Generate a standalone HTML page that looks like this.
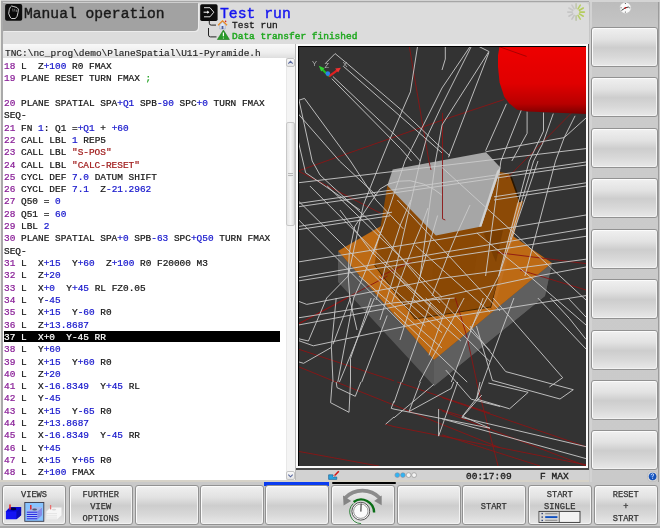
<!DOCTYPE html>
<html><head><meta charset="utf-8">
<style>
*{margin:0;padding:0;box-sizing:border-box}
html,body{width:660px;height:528px;overflow:hidden;background:#cecece;font-family:"Liberation Mono",monospace}
.a{position:absolute;will-change:transform}
.sk{position:absolute;will-change:transform;border:1px solid #929292;border-radius:3px;background:linear-gradient(#f0f0f0,#e2e2e2 30%,#cdcdcd 52%,#d8d8d8 75%,#e8e8e8);box-shadow:inset 1px 1px 0 #fbfbfb,inset -1px -1px 0 #f2f2f2}
.skt{position:absolute;left:0;width:100%;text-align:center;font-size:8.7px;line-height:11.65px;color:#333;white-space:pre;-webkit-text-stroke:0.25px #333}
#hdr{left:3px;top:2.7px;width:586px;height:41.3px;background:#dcdcdc;border-radius:0 4px 0 0}
#hdrL{left:3px;top:2.7px;width:194.5px;height:28px;background:#a2a2a2;border-radius:0 0 4px 0;box-shadow:1px 1px 0 #ececec}
#t1{left:24.2px;top:3.5px;font-size:14.65px;line-height:20px;color:#1a1a1a;white-space:pre;-webkit-text-stroke:0.4px #1a1a1a}
#t2{left:220px;top:3.9px;font-size:14.75px;line-height:20px;color:#1414f0;white-space:pre;-webkit-text-stroke:0.4px #1414f0}
#t3{left:232px;top:20px;font-size:9.5px;line-height:12px;color:#1a1a1a;white-space:pre;-webkit-text-stroke:0.3px #1a1a1a}
#t4{left:232px;top:31px;font-size:9.5px;line-height:12px;color:#20a820;white-space:pre;-webkit-text-stroke:0.45px #20a820}
#path{left:3px;top:44px;width:292px;height:14px;background:linear-gradient(#f8f8f8,#eeeeee 60%,#dedede)}
#pathT{left:5px;top:47.5px;font-size:9.48px;line-height:12px;color:#1e1e1e;white-space:pre;-webkit-text-stroke:0.15px #1e1e1e}
#code{left:3px;top:58px;width:292px;height:422px;background:#fff}
#lines{left:4px;top:61px;font-size:9.45px;line-height:12.32px;color:#151515;white-space:pre;-webkit-text-stroke:0.22px currentColor}
.n{color:#8a2098}.b{color:#1616cc}.r{color:#a01c1c}.g{color:#20a020}
.hl{color:#fff}
#statT{left:466px;top:470.6px;font-size:9.5px;line-height:12px;color:#1e1e1e;white-space:pre;-webkit-text-stroke:0.35px #1e1e1e}
</style></head><body>
<!-- outer left border -->
<div class="a" style="left:0;top:0;width:660px;height:2px;background:#d4d4d4"></div>
<div class="a" style="left:1px;top:1.4px;width:588px;height:1.3px;background:#a6a6a6"></div>
<div class="a" style="left:0;top:0;width:1px;height:483px;background:#ebebe6"></div>
<div class="a" style="left:1px;top:2px;width:2px;height:479px;background:#a9a9a9"></div>
<div class="a" id="hdr"></div>

<div class="a" id="hdrL"></div>
<!-- hand icon -->
<svg class="a" style="left:4px;top:3px" width="20" height="20" viewBox="0 0 20 20">
<rect x="1.1" y="1.1" width="17.1" height="16.7" rx="1.8" fill="#0e0e0e"/>
<path d="M6.4,4.2 L5.3,6.6 L4.7,10.6 L6.1,14 L7.4,15.5 L11.4,15.5 L13.1,13.3 L14,9.5 L14.4,6.1 L12.9,4.5 L9.8,3.6 L7.6,3 Z" fill="#0a0a0a" stroke="#e4e4e4" stroke-width="0.9" stroke-linejoin="round"/>
<path d="M8.7,5.6 L9.1,8.6 M10.6,5.9 L11,8.6 M12.5,6.6 L12.7,9" stroke="#8a8a8a" stroke-width="0.8"/>
</svg>
<div class="a" id="t1">Manual operation</div>
<!-- test run icon -->
<svg class="a" style="left:199px;top:3px" width="20" height="20" viewBox="199 3 20 20">
<rect x="200.2" y="4.3" width="17.4" height="16.6" rx="1.6" fill="#0c0c0c"/>
<path d="M204,7.7 L210,7.7 L213.8,12.2 L210,16.8 L204,16.8" fill="none" stroke="#e0e0e0" stroke-width="1"/>
<path d="M203.6,12.2 L208.6,12.2" stroke="#f4f4f4" stroke-width="1.1"/>
<path d="M207.2,10.6 L209.4,12.2 L207.2,13.8 Z" fill="#f4f4f4"/>
</svg>
<svg class="a" style="left:205px;top:20px" width="30" height="22" viewBox="205 20 30 22">
<path d="M209.3,20.5 L209.3,23.2 Q209.3,25.1 211.2,25.1 L216,25.1" fill="none" stroke="#222" stroke-width="1"/>
<path d="M208.5,28 L208.5,35 Q208.5,36.9 210.4,36.9 L216.5,36.9" fill="none" stroke="#222" stroke-width="1"/>
<!-- house -->
<path d="M218.2,25.3 L222.5,21 L227,25.3" fill="none" stroke="#f08a18" stroke-width="1.4"/>
<path d="M219.8,24.6 L222.5,22 L225.2,24.6 L225.2,29 L219.8,29 Z" fill="#dfe6f4" stroke="#8898b8" stroke-width="0.5"/>
<rect x="221.6" y="26" width="1.8" height="3" fill="#4a5a9a"/>
<circle cx="225.6" cy="21.4" r="0.8" fill="#d02020"/>
<!-- warning -->
<path d="M223.4,30 L229.4,39.5 L217.4,39.5 Z" fill="#2a9a2a" stroke="#1c7a1c" stroke-width="0.6" stroke-linejoin="round"/>
<path d="M223.4,32.4 L223.4,36.2" stroke="#fff" stroke-width="1.2"/>
<circle cx="223.4" cy="38" r="0.6" fill="#fff"/>
</svg>
<div class="a" id="t2">Test run</div>
<div class="a" id="t3">Test run</div>
<div class="a" id="t4">Data transfer finished</div>
<!-- spinner -->
<svg class="a" style="left:566px;top:2px" width="20" height="20" viewBox="566 2 20 20">
<g stroke-linecap="round" stroke-width="1.6">
<line x1="579.8" y1="12.1" x2="584.4" y2="12.1" stroke="#b4cc5c"/>
<line x1="579.4" y1="13.9" x2="583.3" y2="16.2" stroke="#b4cc5c"/>
<line x1="578" y1="15.4" x2="580.3" y2="19.1" stroke="#b8cf66"/>
<line x1="576.1" y1="15.8" x2="576.1" y2="20.3" stroke="#bcc4a8"/>
<line x1="574.2" y1="15.4" x2="571.9" y2="19.1" stroke="#c4c4c4"/>
<line x1="572.8" y1="13.9" x2="568.9" y2="16.2" stroke="#c4c4c4"/>
<line x1="572.4" y1="12.1" x2="567.8" y2="12.1" stroke="#c6c6c6"/>
<line x1="572.8" y1="10.3" x2="568.9" y2="8" stroke="#c8c8c8"/>
<line x1="574.2" y1="8.8" x2="571.9" y2="5.1" stroke="#c8c8c8"/>
<line x1="576.1" y1="8.4" x2="576.1" y2="3.9" stroke="#c0c6b0"/>
<line x1="578" y1="8.8" x2="580.3" y2="5.1" stroke="#b8cf66"/>
<line x1="579.4" y1="10.3" x2="583.3" y2="8" stroke="#b4cc5c"/>
</g></svg>

<div class="a" id="path"></div>
<div class="a" id="pathT">TNC:\nc_prog\demo\PlaneSpatial\U11-Pyramide.h</div>
<div class="a" id="code"></div>
<div class="a" style="left:4px;top:331px;width:276px;height:11px;background:#000"></div>
<div class="a" id="lines"><span class="n">18</span> L  Z<span class="b">+100</span> R0 FMAX
<span class="n">19</span> PLANE RESET TURN FMAX <span class="g">;</span>

<span class="n">20</span> PLANE SPATIAL SPA<span class="b">+Q1</span> SPB<span class="b">-90</span> SPC<span class="b">+0</span> TURN FMAX
SEQ-
<span class="n">21</span> FN <span class="b">1</span>: Q1 =<span class="b">+Q1</span> + <span class="b">+60</span>
<span class="n">22</span> CALL LBL <span class="b">1</span> REP5
<span class="n">23</span> CALL LBL <span class="r">"S-POS"</span>
<span class="n">24</span> CALL LBL <span class="r">"CALC-RESET"</span>
<span class="n">25</span> CYCL DEF <span class="b">7.0</span> DATUM SHIFT
<span class="n">26</span> CYCL DEF <span class="b">7.1</span>  Z<span class="b">-21.2962</span>
<span class="n">27</span> Q50 = <span class="b">0</span>
<span class="n">28</span> Q51 = <span class="b">60</span>
<span class="n">29</span> LBL <span class="b">2</span>
<span class="n">30</span> PLANE SPATIAL SPA<span class="b">+0</span> SPB<span class="b">-63</span> SPC<span class="b">+Q50</span> TURN FMAX
SEQ-
<span class="n">31</span> L  X<span class="b">+15</span>  Y<span class="b">+60</span>  Z<span class="b">+100</span> R0 F20000 M3
<span class="n">32</span> L  Z<span class="b">+20</span>
<span class="n">33</span> L  X<span class="b">+0</span>  Y<span class="b">+45</span> RL FZ0.05
<span class="n">34</span> L  Y<span class="b">-45</span>
<span class="n">35</span> L  X<span class="b">+15</span>  Y<span class="b">-60</span> R0
<span class="n">36</span> L  Z<span class="b">+13.8687</span>
<span class="hl">37 L  X+0  Y-45 RR</span>
<span class="n">38</span> L  Y<span class="b">+60</span>
<span class="n">39</span> L  X<span class="b">+15</span>  Y<span class="b">+60</span> R0
<span class="n">40</span> L  Z<span class="b">+20</span>
<span class="n">41</span> L  X<span class="b">-16.8349</span>  Y<span class="b">+45</span> RL
<span class="n">42</span> L  Y<span class="b">-45</span>
<span class="n">43</span> L  X<span class="b">+15</span>  Y<span class="b">-65</span> R0
<span class="n">44</span> L  Z<span class="b">+13.8687</span>
<span class="n">45</span> L  X<span class="b">-16.8349</span>  Y<span class="b">-45</span> RR
<span class="n">46</span> L  Y<span class="b">+45</span>
<span class="n">47</span> L  X<span class="b">+15</span>  Y<span class="b">+65</span> R0
<span class="n">48</span> L  Z<span class="b">+100</span> FMAX</div>
<!-- scrollbar -->
<div class="a" style="left:286px;top:58px;width:9px;height:422px;background:#f4f4f4;border-left:1px solid #e8e8e8"></div>
<div class="a" style="left:286px;top:58px;width:9px;height:9px;background:linear-gradient(#fafafa,#e4e4e4);border:1px solid #c4c4c4;border-radius:2px"></div>
<svg class="a" style="left:286px;top:58px" width="9" height="9"><path d="M2.3,5.6 L4.5,3.4 L6.7,5.6" fill="none" stroke="#5868a0" stroke-width="1.1"/></svg>
<div class="a" style="left:286px;top:122px;width:9px;height:104px;background:linear-gradient(90deg,#e6e6e6,#f6f6f6 50%,#dedede);border:1px solid #c8c8c8;border-radius:2px"></div>
<div class="a" style="left:288px;top:173px;width:5px;height:4px;background:repeating-linear-gradient(#b8b8b8 0 1px,#ececec 1px 2px)"></div>
<div class="a" style="left:286px;top:471px;width:9px;height:9px;background:linear-gradient(#fafafa,#e4e4e4);border:1px solid #c4c4c4;border-radius:2px"></div>
<svg class="a" style="left:286px;top:471px" width="9" height="9"><path d="M2.3,3.6 L4.5,5.8 L6.7,3.6" fill="none" stroke="#5868a0" stroke-width="1.1"/></svg>
<div class="a" style="left:295px;top:44px;width:1px;height:438px;background:#b8b8b8"></div>

<!-- graphic frame -->
<div class="a" style="left:296px;top:44px;width:293.5px;height:425.5px;background:#4a4a4a"></div>
<div class="a" style="left:296px;top:44px;width:292px;height:424px;background:#fafafa"></div>
<div class="a" style="left:298px;top:46px;width:288px;height:420px;background:#000"></div>
<svg class="a" style="left:299px;top:47px" width="287" height="419" viewBox="299 47 287 419">
<rect x="299" y="47" width="287" height="419" fill="#333"/>
<defs><linearGradient id="cyl" x1="0" y1="0" x2="0" y2="1"><stop offset="0" stop-color="#ee0000"/><stop offset="0.55" stop-color="#e00000"/><stop offset="0.85" stop-color="#b80000"/><stop offset="1" stop-color="#7a0000"/></linearGradient></defs>
<!-- base block -->
<path d="M338,251 L338,282 L434,386 L545,296 L552,263 L434,360 Z" fill="#565656"/>
<path d="M434,360 L434,386 L545,296 L552,263 Z" fill="#5f5f5f"/>
<!-- orange square -->
<path d="M338,251 L445,189 L552,263 L434,360 Z" fill="#bd6a14"/>
<!-- pyramid -->
<path d="M394,172 L387.3,185.5 L374.5,265 L415,319 L490.5,307 L520,202 L510,174 L499.5,171.8 L498,168 Z" fill="#8c4a06"/>
<path d="M483,232 L503,230 L496,262 Z" fill="#7a3e02"/>
<path d="M436,235 L481,227 L470,300 L430,305 Z" fill="#8a4804"/>
<path d="M374.5,265 L415,319 L490.5,307" fill="none" stroke="#3a2000" stroke-width="0.9"/>
<path d="M510,174 L520,202 L491,308" fill="none" stroke="#2a1600" stroke-width="1.6"/>
<path d="M517,203 L523,201 L494,309 L491,308 Z" fill="#c07020"/>
<!-- hexagon -->
<path d="M392.7,169.5 L486,152.3 L500.4,167.4 L499.5,171.8 L481.4,226.4 L435.9,235.5 L387.3,185.5 Z" fill="#a6a6a6"/>
<path d="M500.4,167.4 L499.5,171.8 L481.4,226.4 L479,226.8 L497,171 Z" fill="#d0d0d0"/>
<!--TRIAD-->
<g font-family="Liberation Sans" font-size="7.5" fill="#b4b4b4"><text x="312" y="66">Y</text><text x="324.5" y="68">Z</text><text x="342.5" y="67">X</text></g>
<path d="M329,76.3 L321.5,68.5" stroke="#20c020" stroke-width="2"/>
<path d="M318.8,65.8 L324.6,68.2 L321.2,71.6 Z" fill="#30d030"/>
<path d="M329,76.3 L337.5,70.2" stroke="#e02020" stroke-width="2.2"/>
<path d="M340.8,67.8 L335.2,68.6 L338.2,72.6 Z" fill="#f03030"/>
<circle cx="327.8" cy="73.6" r="2.3" fill="#2a80e8"/>
<!--LINES-->
<g fill="none" stroke="#8c1414" stroke-width="0.9"><polyline points="409.3,46.0 413.6,72.2 428.9,161.0 431.0,170.0"/><polyline points="298.0,171.0 442.0,120.2 504.2,99.5"/><polyline points="572.9,111.5 506.7,178.6"/><polyline points="442.5,112.9 442.5,218.8 445.3,220.0"/><polyline points="298.0,170.8 380.9,213.4"/><polyline points="380.9,276.0 411.5,261.4"/><polyline points="497.6,252.6 586.0,263.6"/><polyline points="520.0,270.0 586.0,290.0"/><polyline points="298.0,324.0 387.5,276.0"/><polyline points="298.0,324.3 347.4,298.0"/><polyline points="298.0,349.0 394.0,380.8"/><polyline points="298.0,366.5 336.2,382.1"/><polyline points="455.3,298.0 467.2,337.8 476.8,382.1"/><polyline points="442.0,397.6 586.0,446.7"/><polyline points="442.0,410.9 586.0,466.0"/><polyline points="442.0,434.8 540.1,466.0"/><polyline points="336.2,382.0 394.0,405.1 500.1,447.8"/><polyline points="385.6,424.2 394.0,426.6 490.0,445.7 586.1,464.8"/><polyline points="298.0,451.3 379.2,466.1"/><polyline points="397.2,382.0 490.0,413.1"/><polyline points="438.6,409.1 462.5,416.2"/><polyline points="476.6,382.0 498.1,466.1"/></g>
<g fill="none" stroke="#cbcbcb" stroke-width="0.9"><polyline points="335.1,53.6 325.3,63.5"/><polyline points="335.1,53.6 347.1,63.5"/><polyline points="347.1,63.5 400.6,109.3 442.0,148.6 450.0,156.0"/><polyline points="343.8,66.7 442.0,152.9"/><polyline points="332.9,76.5 407.1,146.4 420.2,161.0"/><polyline points="331.8,78.7 400.6,148.6 411.5,161.0"/><polyline points="298.0,100.5 304.5,98.4 350.4,161.0 376.0,200.0 403.3,228.8"/><polyline points="299.1,100.5 312.2,161.0 320.0,175.0 370.0,221.2 420.0,280.0 440.0,303.0"/><polyline points="298.0,113.6 339.5,161.0 376.0,195.0"/><polyline points="298.0,140.0 305.6,172.7 360.0,210.0"/><polyline points="417.6,46.0 410.4,91.8 389.6,139.8 380.9,161.0 363.5,204.6 348.2,276.0 326.7,298.0"/><polyline points="470.4,46.0 442.0,88.0 411.5,148.6 405.0,161.0 383.1,226.5 363.5,276.0 353.7,298.0"/><polyline points="471.5,46.0 442.0,105.0 426.7,137.6 420.2,161.0 394.0,276.0 380.0,320.0"/><polyline points="488.9,51.5 442.0,125.0 435.5,161.0 420.2,276.0"/><polyline points="445.3,46.0 445.3,59.1 442.0,70.0"/><polyline points="478.0,46.0 488.9,51.5"/><polyline points="488.9,52.5 448.5,157.3"/><polyline points="506.4,103.8 485.6,150.7"/><polyline points="523.8,103.8 500.9,161.0 485.6,276.0"/><polyline points="527.1,111.5 527.1,133.3 511.8,161.0"/><polyline points="543.5,112.5 543.5,131.1 529.3,161.0 498.7,276.0"/><polyline points="553.3,113.6 542.4,144.2 533.6,161.0 510.0,240.0"/><polyline points="575.1,115.8 564.2,137.6 555.5,161.0 524.9,276.0"/><polyline points="586.0,118.0 564.2,137.6 485.6,151.8"/><polyline points="298.0,182.8 586.0,148.6"/><polyline points="298.0,203.5 586.0,162.0"/><polyline points="298.0,206.8 586.0,165.0"/><polyline points="298.0,226.5 392.0,212.2"/><polyline points="494.0,196.8 586.0,182.8"/><polyline points="298.0,229.7 390.0,215.8"/><polyline points="494.0,200.0 586.0,186.0"/><polyline points="298.0,262.0 442.0,239.0 586.0,215.0"/><polyline points="298.0,277.7 442.0,252.6 586.0,228.6"/><polyline points="298.0,281.0 442.0,258.1 586.0,236.3"/><polyline points="298.0,340.4 313.3,345.8 442.0,318.5 586.0,295.6"/><polyline points="298.0,301.1 306.7,304.4 442.0,278.2 586.0,259.2"/><polyline points="298.0,325.1 385.3,308.7 442.0,296.5 538.0,276.0 586.0,267.0"/><polyline points="437.6,215.5 420.2,276.0 400.0,340.0"/><polyline points="441.8,195.0 434.2,189.5 423.3,184.0 410.2,180.7 399.3,181.2 388.4,184.0 380.0,189.0 372.2,200.3 354.7,226.5 349.3,252.6 348.2,276.0 350.0,300.0 357.0,330.0"/><polyline points="538.0,161.0 498.7,276.0 470.0,330.0"/><polyline points="442.0,167.5 514.0,233.0 551.1,267.9 586.0,300.0"/><polyline points="476.9,233.0 529.3,276.0 586.0,325.0"/><polyline points="397.3,200.0 470.0,278.8 500.0,311.0"/><polyline points="340.0,210.0 370.0,250.0 400.3,280.0 420.0,300.0"/><polyline points="415.5,245.5 445.8,272.7 490.0,312.0"/><polyline points="410.9,200.0 400.3,225.0 392.7,248.5 385.2,266.7 382.1,280.0 376.0,300.0"/><polyline points="428.0,208.0 421.5,225.8 413.9,244.0 406.4,263.6 400.3,280.0 392.0,302.0"/><polyline points="470.0,205.0 456.4,234.8 448.8,253.0 441.2,272.7 432.0,296.0"/><polyline points="382.9,226.5 373.0,254.5"/><polyline points="309.9,186.0 442.0,318.6"/><polyline points="327.2,186.0 442.0,297.4"/><polyline points="298.0,200.6 425.3,326.0"/><polyline points="298.0,219.2 404.1,326.0"/><polyline points="359.1,276.0 442.0,348.0"/><polyline points="378.7,276.0 442.0,332.7"/><polyline points="396.2,276.0 442.0,315.3"/><polyline points="326.7,298.0 308.4,341.0 298.0,338.6"/><polyline points="298.0,317.9 394.0,302.8"/><polyline points="298.0,361.7 303.6,363.3 331.4,347.4 336.2,298.0"/><polyline points="331.4,347.4 333.0,382.1"/><polyline points="350.5,298.0 333.0,344.2"/><polyline points="353.7,298.0 337.8,382.1"/><polyline points="371.2,298.0 350.5,358.5 350.5,382.1"/><polyline points="374.4,298.0 339.4,382.1"/><polyline points="387.2,315.5 361.7,382.1"/><polyline points="394.0,302.8 454.5,298.0"/><polyline points="411.5,298.0 460.9,341.0"/><polyline points="425.8,298.0 490.0,361.7"/><polyline points="438.6,298.0 490.0,350.5"/><polyline points="394.0,312.3 467.2,382.1"/><polyline points="449.7,298.0 429.0,355.3"/><polyline points="464.1,298.0 419.5,382.1"/><polyline points="483.2,298.0 451.3,382.1"/><polyline points="430.6,302.8 402.0,382.1"/><polyline points="513.9,298.0 500.4,333.8 476.5,399.0"/><polyline points="493.2,298.0 562.7,377.7 549.4,387.0"/><polyline points="476.5,326.0 492.4,380.4 560.0,399.0 573.3,389.7 505.7,371.6 469.9,326.0"/><polyline points="476.5,399.0 509.6,408.8 528.2,392.3 488.4,383.0"/><polyline points="461.9,417.5 481.8,395.0"/><polyline points="461.9,417.5 586.0,446.7"/><polyline points="442.0,418.8 586.0,458.6"/><polyline points="537.8,298.0 586.0,349.0"/><polyline points="550.5,298.0 569.6,318.7 586.0,339.4"/><polyline points="568.0,298.0 586.0,317.1"/><polyline points="332.2,382.0 330.6,402.7 349.0,412.3 350.5,382.0"/><polyline points="336.2,382.0 337.0,387.6 355.3,396.3 360.9,382.0"/><polyline points="394.0,401.1 391.2,408.3 394.0,409.1"/><polyline points="385.6,424.2 394.0,417.0"/><polyline points="401.2,382.0 394.0,402.7"/><polyline points="394.0,409.1 490.0,428.2"/><polyline points="409.1,411.5 420.3,382.0"/><polyline points="433.8,384.4 394.0,417.8"/><polyline points="409.1,411.5 451.3,388.4 453.7,382.0"/><polyline points="457.7,382.0 438.6,436.1 438.6,409.1"/><polyline points="445.8,370.1 471.2,399.2 500.1,406.5"/><polyline points="480.0,382.0 476.8,397.9 462.5,416.2 490.0,428.2"/></g>
<!--/LINES-->
<path d="M499.6,46 L498,55.6 L498,66.7 L499.6,82.6 L504.3,97 L509.1,103.3 L517,109.7 L528.2,111.6 L586,114 L586,46 Z" fill="url(#cyl)"/>
<line x1="499.6" y1="46.8" x2="526.6" y2="56.4" stroke="#900" stroke-width="0.8"/>
</svg>
<!-- status bar -->
<div class="a" style="left:296px;top:470px;width:293px;height:11px;background:#d2d2d2"></div>
<svg class="a" style="left:326px;top:469px" width="16" height="13" viewBox="326 469 16 13">
<path d="M328.6,474.8 L333,474.8 L333,477 L336.8,477 L336.8,479.4 L328.6,479.4 Z" fill="#2aa4e0" stroke="#1a5a8a" stroke-width="0.6"/>
<path d="M334,476.2 L338.8,471.2" stroke="#d01818" stroke-width="1.6"/>
<path d="M333.6,476.8 L334.8,475.4" stroke="#fff" stroke-width="0.8"/>
</svg>
<svg class="a" style="left:392px;top:470px" width="26" height="10" viewBox="392 470 26 10">
<circle cx="397.3" cy="475.1" r="2.4" fill="#30b4f4" stroke="#8a8a9a" stroke-width="0.6"/>
<circle cx="402.9" cy="475.1" r="2.4" fill="#30b4f4" stroke="#8a8a9a" stroke-width="0.6"/>
<circle cx="408.6" cy="475.1" r="2.4" fill="#f4f4f4" stroke="#8a8a8a" stroke-width="0.6"/>
<circle cx="414.1" cy="475.1" r="2.4" fill="#f4f4f4" stroke="#8a8a8a" stroke-width="0.6"/>
</svg>
<div class="a" id="statT">00:17:09     F MAX</div>
<!-- right column -->
<div class="a" style="left:589px;top:2px;width:71px;height:480px;background:linear-gradient(#bcbcbc,#c6c6c6 25px,#cbcbcb 60px,#cacaca)"></div>
<div class="a" style="left:589.5px;top:2px;width:1.5px;height:480px;background:#d2d2d2"></div>
<div class="a" style="left:658px;top:2px;width:1px;height:480px;background:#9c9c9c"></div>
<svg class="a" style="left:618px;top:1px" width="15" height="14" viewBox="618 1 15 14">
<circle cx="625.4" cy="7.8" r="5.4" fill="#fafafa" stroke="#e0e0e0" stroke-width="0.6" stroke-dasharray="1.2 1.6"/>
<g stroke="#333" stroke-width="0.8">
<line x1="625.4" y1="3" x2="625.4" y2="4"/><line x1="625.4" y1="11.6" x2="625.4" y2="12.6"/>
<line x1="620.6" y1="7.8" x2="621.6" y2="7.8"/><line x1="629.2" y1="7.8" x2="630.2" y2="7.8"/>
</g>
<path d="M621.5,10.4 L625.4,7.8 L628.8,7" stroke="#222" stroke-width="0.9" fill="none"/>
<circle cx="625.4" cy="7.8" r="0.9" fill="#e01010"/>
</svg>
<svg class="a" style="left:647px;top:471px" width="11" height="11" viewBox="647 471 11 11">
<rect x="648" y="472" width="9" height="9" rx="2" fill="#e2e2e2" stroke="#b0b0b0" stroke-width="0.6"/>
<circle cx="652.6" cy="476.5" r="3.8" fill="#1450b8"/>
<circle cx="652" cy="475.6" r="2" fill="#3a7ae0" opacity="0.6"/>
<path d="M651.4,475 Q651.6,473.6 652.7,473.6 Q653.8,473.8 653.6,475 Q653.4,475.8 652.7,476.3 L652.7,477.4" fill="none" stroke="#dde8ff" stroke-width="0.8"/>
<circle cx="652.7" cy="478.6" r="0.5" fill="#dde8ff"/>
</svg>
<!-- bottom band -->
<div class="a" style="left:0;top:480px;width:589px;height:2px;background:#d6d2c8"></div>
<div class="a" style="left:0;top:482px;width:660px;height:46px;background:#c9c9c9"></div>
<div class="a" style="left:0;top:526px;width:660px;height:2px;background:#a8a8a8"></div>
<div class="a" style="left:264px;top:481.5px;width:64.5px;height:3.7px;background:#0a3cf0"></div>
<div class="a" style="left:332px;top:482px;width:63.5px;height:2.3px;background:#000;border-radius:1px"></div>

<!-- right softkeys -->
<div class="sk" style="left:591px;top:27px;width:67px;height:40px"></div>
<div class="sk" style="left:591px;top:77px;width:67px;height:40px"></div>
<div class="sk" style="left:591px;top:128px;width:67px;height:40px"></div>
<div class="sk" style="left:591px;top:178px;width:67px;height:40px"></div>
<div class="sk" style="left:591px;top:229px;width:67px;height:40px"></div>
<div class="sk" style="left:591px;top:279px;width:67px;height:40px"></div>
<div class="sk" style="left:591px;top:330px;width:67px;height:40px"></div>
<div class="sk" style="left:591px;top:380px;width:67px;height:40px"></div>
<div class="sk" style="left:591px;top:430px;width:67px;height:40px"></div>

<!-- bottom softkeys -->
<div class="sk" style="left:2px;top:485px;width:64px;height:40px"><div class="skt" style="top:4.2px">VIEWS</div>
<svg style="position:absolute;left:-1px;top:-1px" width="64" height="40" viewBox="2 485 64 40">
<path d="M5.9,511.4 L10.2,507.1 L21.1,507.1 L21.1,515.2 L16.4,519.2 L5.9,519.2 Z" fill="#1414f4"/>
<path d="M5.9,511.4 L10.2,507.1 L21.1,507.1 L16.4,511.4 Z" fill="#0606d8"/>
<path d="M16.4,511.4 L21.1,507.1 L21.1,515.2 L16.4,519.2 Z" fill="#0a0ab4"/>
<ellipse cx="13.3" cy="508.9" rx="3" ry="1.3" fill="#000040"/>
<path d="M10,504.5 L10,509.6" stroke="#e82020" stroke-width="1.5"/>
<rect x="24.8" y="502.5" width="19" height="18.8" fill="#88c4ff" stroke="#3a3a4a" stroke-width="0.9"/>
<path d="M26.8,511.4 L30.8,507.5 L42,507.1 L42,515.3 L37.4,519.4 L26.8,519.4 Z" fill="#b4c8f8"/>
<path d="M26.8,511.4 L30.8,507.5 L42,507.1 L37.4,511.4 Z" fill="#a8b8e8"/>
<ellipse cx="34.6" cy="509.4" rx="2.4" ry="1" fill="#505878"/>
<g stroke="#1a1ae0" stroke-width="1"><line x1="26.8" y1="512.2" x2="37.4" y2="512.2"/><line x1="26.8" y1="514.4" x2="37.4" y2="514.4"/><line x1="26.8" y1="516.6" x2="37.4" y2="516.6"/><line x1="26.8" y1="518.8" x2="37.4" y2="518.8"/></g>
<path d="M37.4,511.6 L42,507.4 L42,515.3 L37.4,519.4 Z" fill="#7070e0" opacity="0.7"/>
<path d="M30.8,505 L30.8,509.6" stroke="#e02020" stroke-width="1.4"/>
<path d="M46.4,511.4 L50.6,507.6 L61.5,507.6 L61.5,515.3 L57,519.2 L46.4,519.2 Z" fill="#f6f6f6"/>
<g stroke="#dedede" stroke-width="0.8"><line x1="46.4" y1="513.6" x2="57" y2="513.6"/><line x1="46.4" y1="515.8" x2="57" y2="515.8"/><line x1="46.4" y1="518" x2="57" y2="518"/></g>
<ellipse cx="54" cy="509.6" rx="2.2" ry="0.9" fill="#d8d8d8"/>
<path d="M50.6,505 L50.6,509.4" stroke="#e87070" stroke-width="1.3"/>
</svg></div>
<div class="sk" style="left:68.5px;top:485px;width:63.5px;height:40px"><div class="skt" style="top:4.3px">FURTHER
VIEW
OPTIONS</div></div>
<div class="sk" style="left:134.5px;top:485px;width:63.5px;height:40px"></div>
<div class="sk" style="left:199.5px;top:485px;width:63.5px;height:40px"></div>
<div class="sk" style="left:264.7px;top:485px;width:63.5px;height:40px"></div>
<div class="sk" style="left:331.4px;top:485px;width:63.5px;height:40px">
<svg style="position:absolute;left:-1px;top:-1px" width="63" height="40" viewBox="331.4 485 63 40">
<path d="M345.4,498 A24.2,24.2 0 0 1 380.2,498" fill="none" stroke="#8c8c8c" stroke-width="3.6"/>
<path d="M343.4,495.6 L351.6,500.9 L344,505.6 Z" fill="#858585"/>
<path d="M382.1,495.6 L374.6,500.9 L382.1,505.3 Z" fill="#858585"/>
<path d="M354,501.9 A13,13 0 0 1 374.5,512.5" fill="none" stroke="#0a6e16" stroke-width="2.4"/>
<path d="M353.6,503.5 A11.8,11.8 0 0 0 361.5,523.6" fill="none" stroke="#0a6e16" stroke-width="0.8"/>
<circle cx="361.2" cy="511.2" r="8.9" fill="#fbfbfb" stroke="#444" stroke-width="0.9"/>
<circle cx="361.2" cy="511.2" r="7.2" fill="none" stroke="#555" stroke-width="0.6"/>
<path d="M361.5,503.6 L361.3,511.6" stroke="#222" stroke-width="1"/>
</svg></div>
<div class="sk" style="left:396.8px;top:485px;width:63.5px;height:40px"></div>
<div class="sk" style="left:462.3px;top:485px;width:63.5px;height:40px"><div class="skt" style="top:15.5px">START</div></div>
<div class="sk" style="left:528.4px;top:485px;width:63.5px;height:40px"><div class="skt" style="top:4.2px">START
SINGLE</div>
<svg style="position:absolute;left:-1px;top:-1px" width="63" height="40" viewBox="528.4 485 63 40">
<rect x="539.4" y="511.4" width="41" height="11" fill="#f2f2f2" stroke="#333" stroke-width="0.9"/>
<rect x="540.1" y="512.1" width="19.4" height="9.6" fill="#d8d8d8"/>
<g fill="#2a3a70"><rect x="541.9" y="512.9" width="1.4" height="1.3"/><rect x="541.9" y="516.4" width="1.4" height="1.4"/><rect x="541.9" y="519.8" width="1.4" height="1.3"/></g>
<g stroke="#9a9a9a" stroke-width="1.4"><line x1="545.6" y1="513.6" x2="557.8" y2="513.6"/><line x1="545.6" y1="520.4" x2="557.8" y2="520.4"/></g>
<line x1="545.6" y1="517.1" x2="557.8" y2="517.1" stroke="#1050c0" stroke-width="1.9"/>
<line x1="559.7" y1="512" x2="559.7" y2="522" stroke="#444" stroke-width="0.8"/>
</svg></div>
<div class="sk" style="left:594px;top:485px;width:63.5px;height:40px"><div class="skt" style="top:4.2px">RESET
+
START</div></div>
</body></html>
